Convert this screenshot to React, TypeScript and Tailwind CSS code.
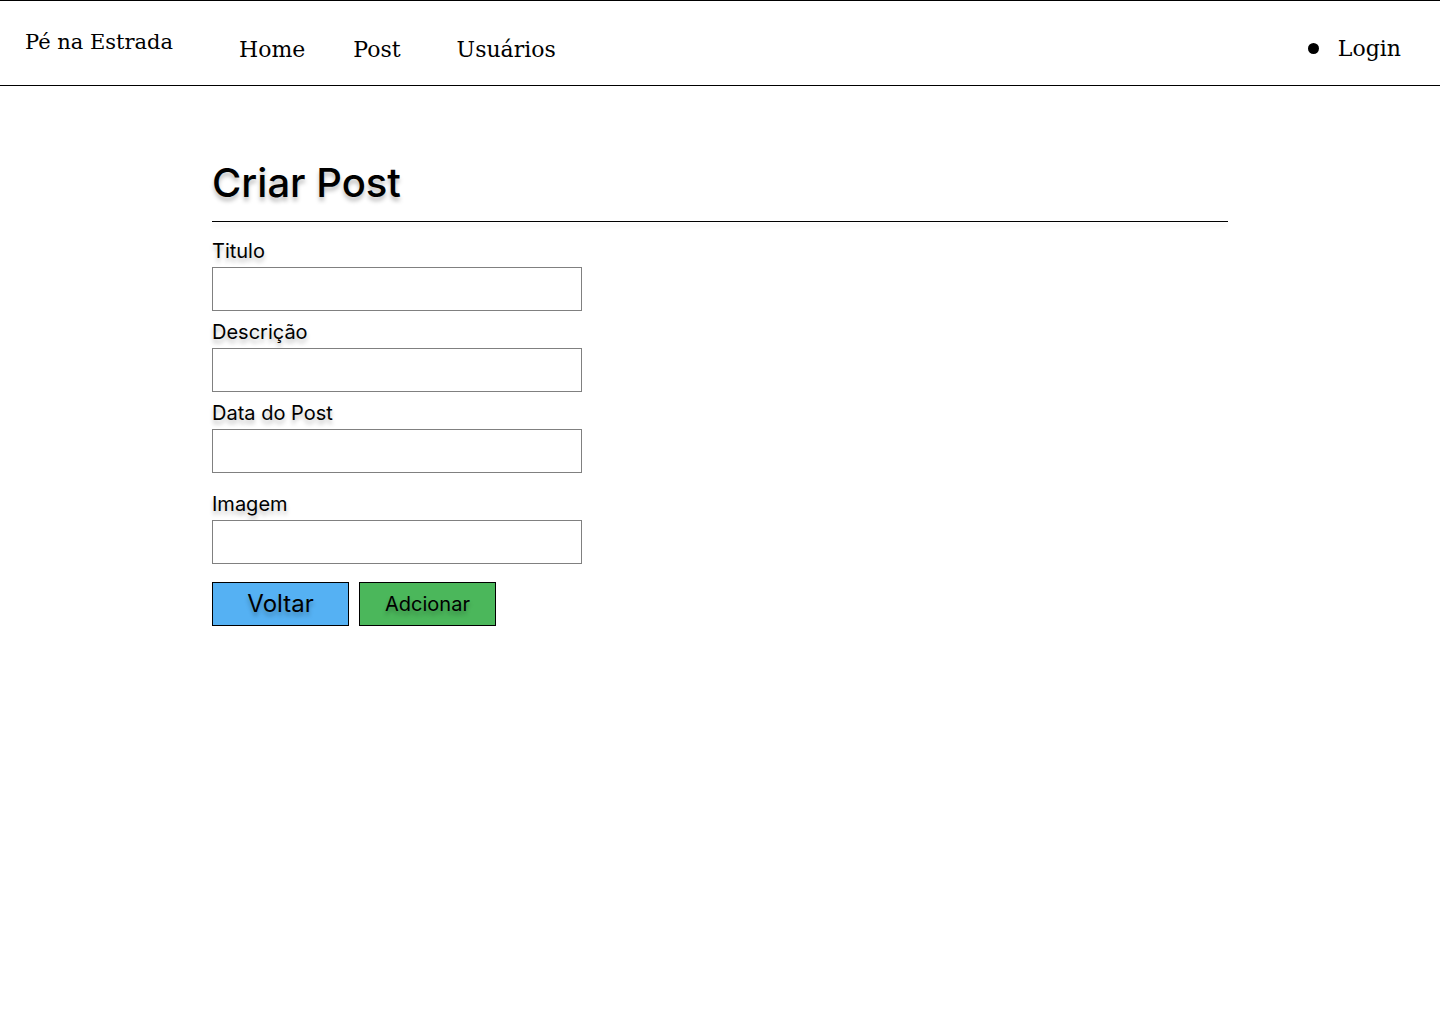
function Field(props: { label: string; extra?: boolean }) {
  return (
    <div className={props.extra ? "mt-[21px] flex flex-col" : "mt-[11px] flex flex-col"}>
      <label className="h-[20px] text-[20px] leading-[20px] [text-shadow:0_4px_4px_rgba(0,0,0,0.25)]">
        {props.label}
      </label>
      <input type="text" className="mt-[6px] h-[44px] w-[370px] border border-[#808080] bg-white px-2 outline-none" />
    </div>
  );
}

export default function App() {
  return (
    <div className="min-h-[1024px] w-full bg-white text-black">
      <nav className="flex h-[86px] items-center border-t border-b border-black font-['DejaVu_Serif',serif]">
        <div className="ml-[25px] w-[214px] pb-[1px] text-[21px]">Pé na Estrada</div>
        <div className="flex items-center pt-[12px] text-[22px]">
          <a className="mr-[48px]">Home</a>
          <a className="mr-[56px]">Post</a>
          <a>Usuários</a>
        </div>
        <div className="ml-auto mr-[39px] flex items-center pt-[10px]">
          <span className="mr-[19px] h-[11px] w-[11px] rounded-full bg-black"></span>
          <span className="text-[22px]">Login</span>
        </div>
      </nav>

      <main className="ml-[212px] w-[1016px] font-['Inter',sans-serif]">
        <h1 className="mt-[73px] h-[48px] text-[40px] leading-[48px] font-medium [text-shadow:0_4px_4px_rgba(0,0,0,0.25)]">
          Criar Post
        </h1>
        <div className="mt-[14px] h-px w-full bg-black shadow-[0_4px_4px_rgba(0,0,0,0.1)]"></div>

        <div className="mt-[19px]">
          <Field label="Titulo" />
          <Field label="Descrição" />
          <Field label="Data do Post" />
          <Field label="Imagem" extra />
        </div>

        <div className="mt-[18px] flex gap-[10px]">
          <button className="h-[44px] w-[137px] border border-black bg-[#55b1f3] text-[24px] [text-shadow:0_4px_4px_rgba(0,0,0,0.25)]">
            Voltar
          </button>
          <button className="h-[44px] w-[137px] border border-black bg-[#4bb75b] text-[20px] [text-shadow:0_4px_4px_rgba(0,0,0,0.25)]">
            Adcionar
          </button>
        </div>
      </main>
    </div>
  );
}
